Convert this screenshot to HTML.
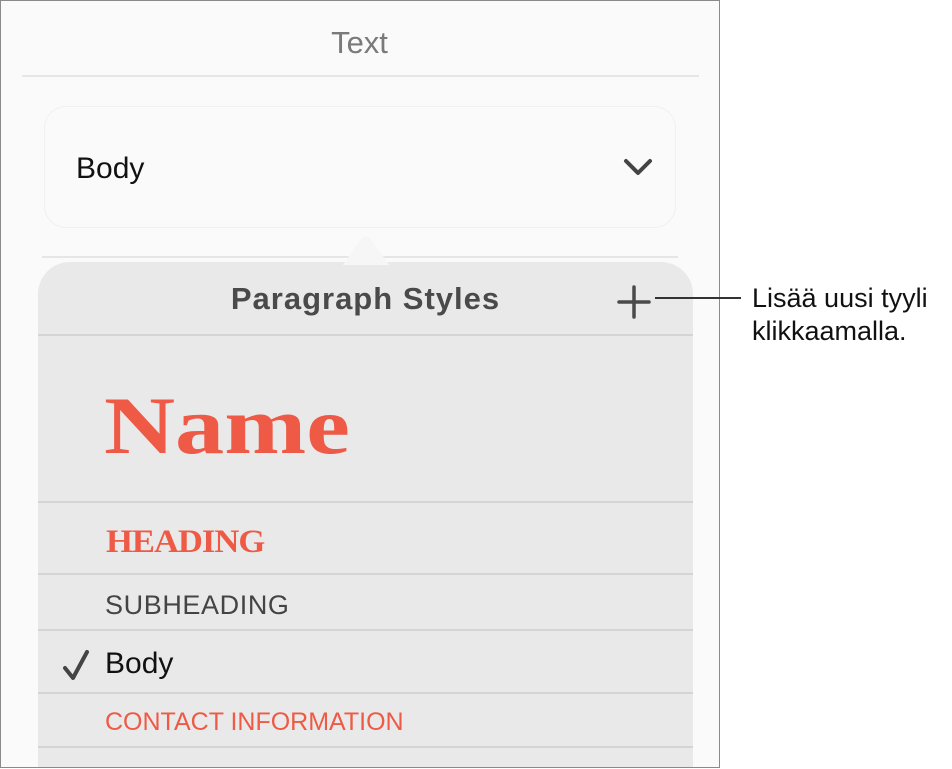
<!DOCTYPE html>
<html><head><meta charset="utf-8"><style>
*{margin:0;padding:0;box-sizing:border-box}
body{width:952px;height:769px;background:#fff;position:relative;overflow:hidden;font-family:"Liberation Sans",sans-serif}
.frame{position:absolute;left:0;top:0;width:720px;height:768px;border:1.5px solid #8a8a8a;background:#fafafa;overflow:hidden}
.abs{position:absolute}
.line{position:absolute;height:2px;background:#dcdcdc}
</style></head><body>
<div class="frame">
  <div class="abs" style="left:0;width:717px;top:24px;text-align:center;font-size:31px;color:#7a7a7a">Text</div>
  <div class="line" style="left:21px;width:677px;top:74px;background:#e6e6e6"></div>
  <div class="abs" style="left:43px;top:105px;width:632px;height:122px;border-radius:22px;background:#fafafa;border:1px solid #f0f0f0"></div>
  <div class="abs" style="left:75px;top:151px;font-size:30px;color:#111">Body</div>
  <svg class="abs" style="left:620px;top:155px" width="34" height="24"><path d="M5 5 L17 17 L29 5" fill="none" stroke="#444" stroke-width="4" stroke-linecap="round" stroke-linejoin="round"/></svg>
  <div class="line" style="left:41px;width:636px;top:255px;background:#e6e6e6"></div>
  <div class="abs" style="left:37px;top:261px;width:655px;height:520px;border-radius:32px 32px 0 0;background:#e9e9e9"></div>
  <svg class="abs" style="left:340px;top:232px" width="50" height="32"><path d="M2 32 L20 6 Q25 0 30 6 L48 32 Z" fill="#f6f6f6"/></svg>
  <div class="abs" style="left:37px;width:655px;top:280px;text-align:center;font-size:31px;font-weight:bold;color:#4a4a4a;letter-spacing:1px">Paragraph Styles</div>
  <svg class="abs" style="left:616px;top:284px" width="34" height="34"><path d="M17 2 V32 M2 17 H32" stroke="#4a4a4a" stroke-width="3.5" stroke-linecap="round"/></svg>
  <div class="line" style="left:37px;width:655px;top:333px;background:#d4d4d4"></div>
  <div class="abs" style="left:103px;top:378px;font-family:'Liberation Serif',serif;font-weight:bold;font-size:82px;color:#ee5a45;transform:scaleX(1.2);transform-origin:left">Name</div>
  <div class="line" style="left:37px;width:655px;top:500px;background:#d4d4d4"></div>
  <div class="abs" style="left:105px;top:523px;font-family:'Liberation Serif',serif;font-weight:bold;font-size:33px;color:#ee5a45;transform:scaleX(1.05);transform-origin:left;letter-spacing:-1px">HEADING</div>
  <div class="line" style="left:37px;width:655px;top:572px;background:#d4d4d4"></div>
  <div class="abs" style="left:104px;top:589px;font-size:27px;color:#444;letter-spacing:0.6px">SUBHEADING</div>
  <div class="line" style="left:37px;width:655px;top:628px;background:#d4d4d4"></div>
  <svg class="abs" style="left:60px;top:647px" width="32" height="34"><path d="M4 20 L12 30 L26 4" fill="none" stroke="#444" stroke-width="4" stroke-linecap="round" stroke-linejoin="round"/></svg>
  <div class="abs" style="left:104px;top:646px;font-size:30px;color:#111">Body</div>
  <div class="line" style="left:37px;width:655px;top:691px;background:#d4d4d4"></div>
  <div class="abs" style="left:104px;top:707px;font-size:25px;color:#ee5a45">CONTACT INFORMATION</div>
  <div class="line" style="left:37px;width:655px;top:745px;background:#d4d4d4"></div>
</div>
<div class="abs" style="left:655px;top:297px;width:86px;height:1.5px;background:#333"></div>
<div class="abs" style="left:752px;top:282px;font-size:27px;line-height:33px;color:#111">Lisää uusi tyyli<br>klikkaamalla.</div>
</body></html>
